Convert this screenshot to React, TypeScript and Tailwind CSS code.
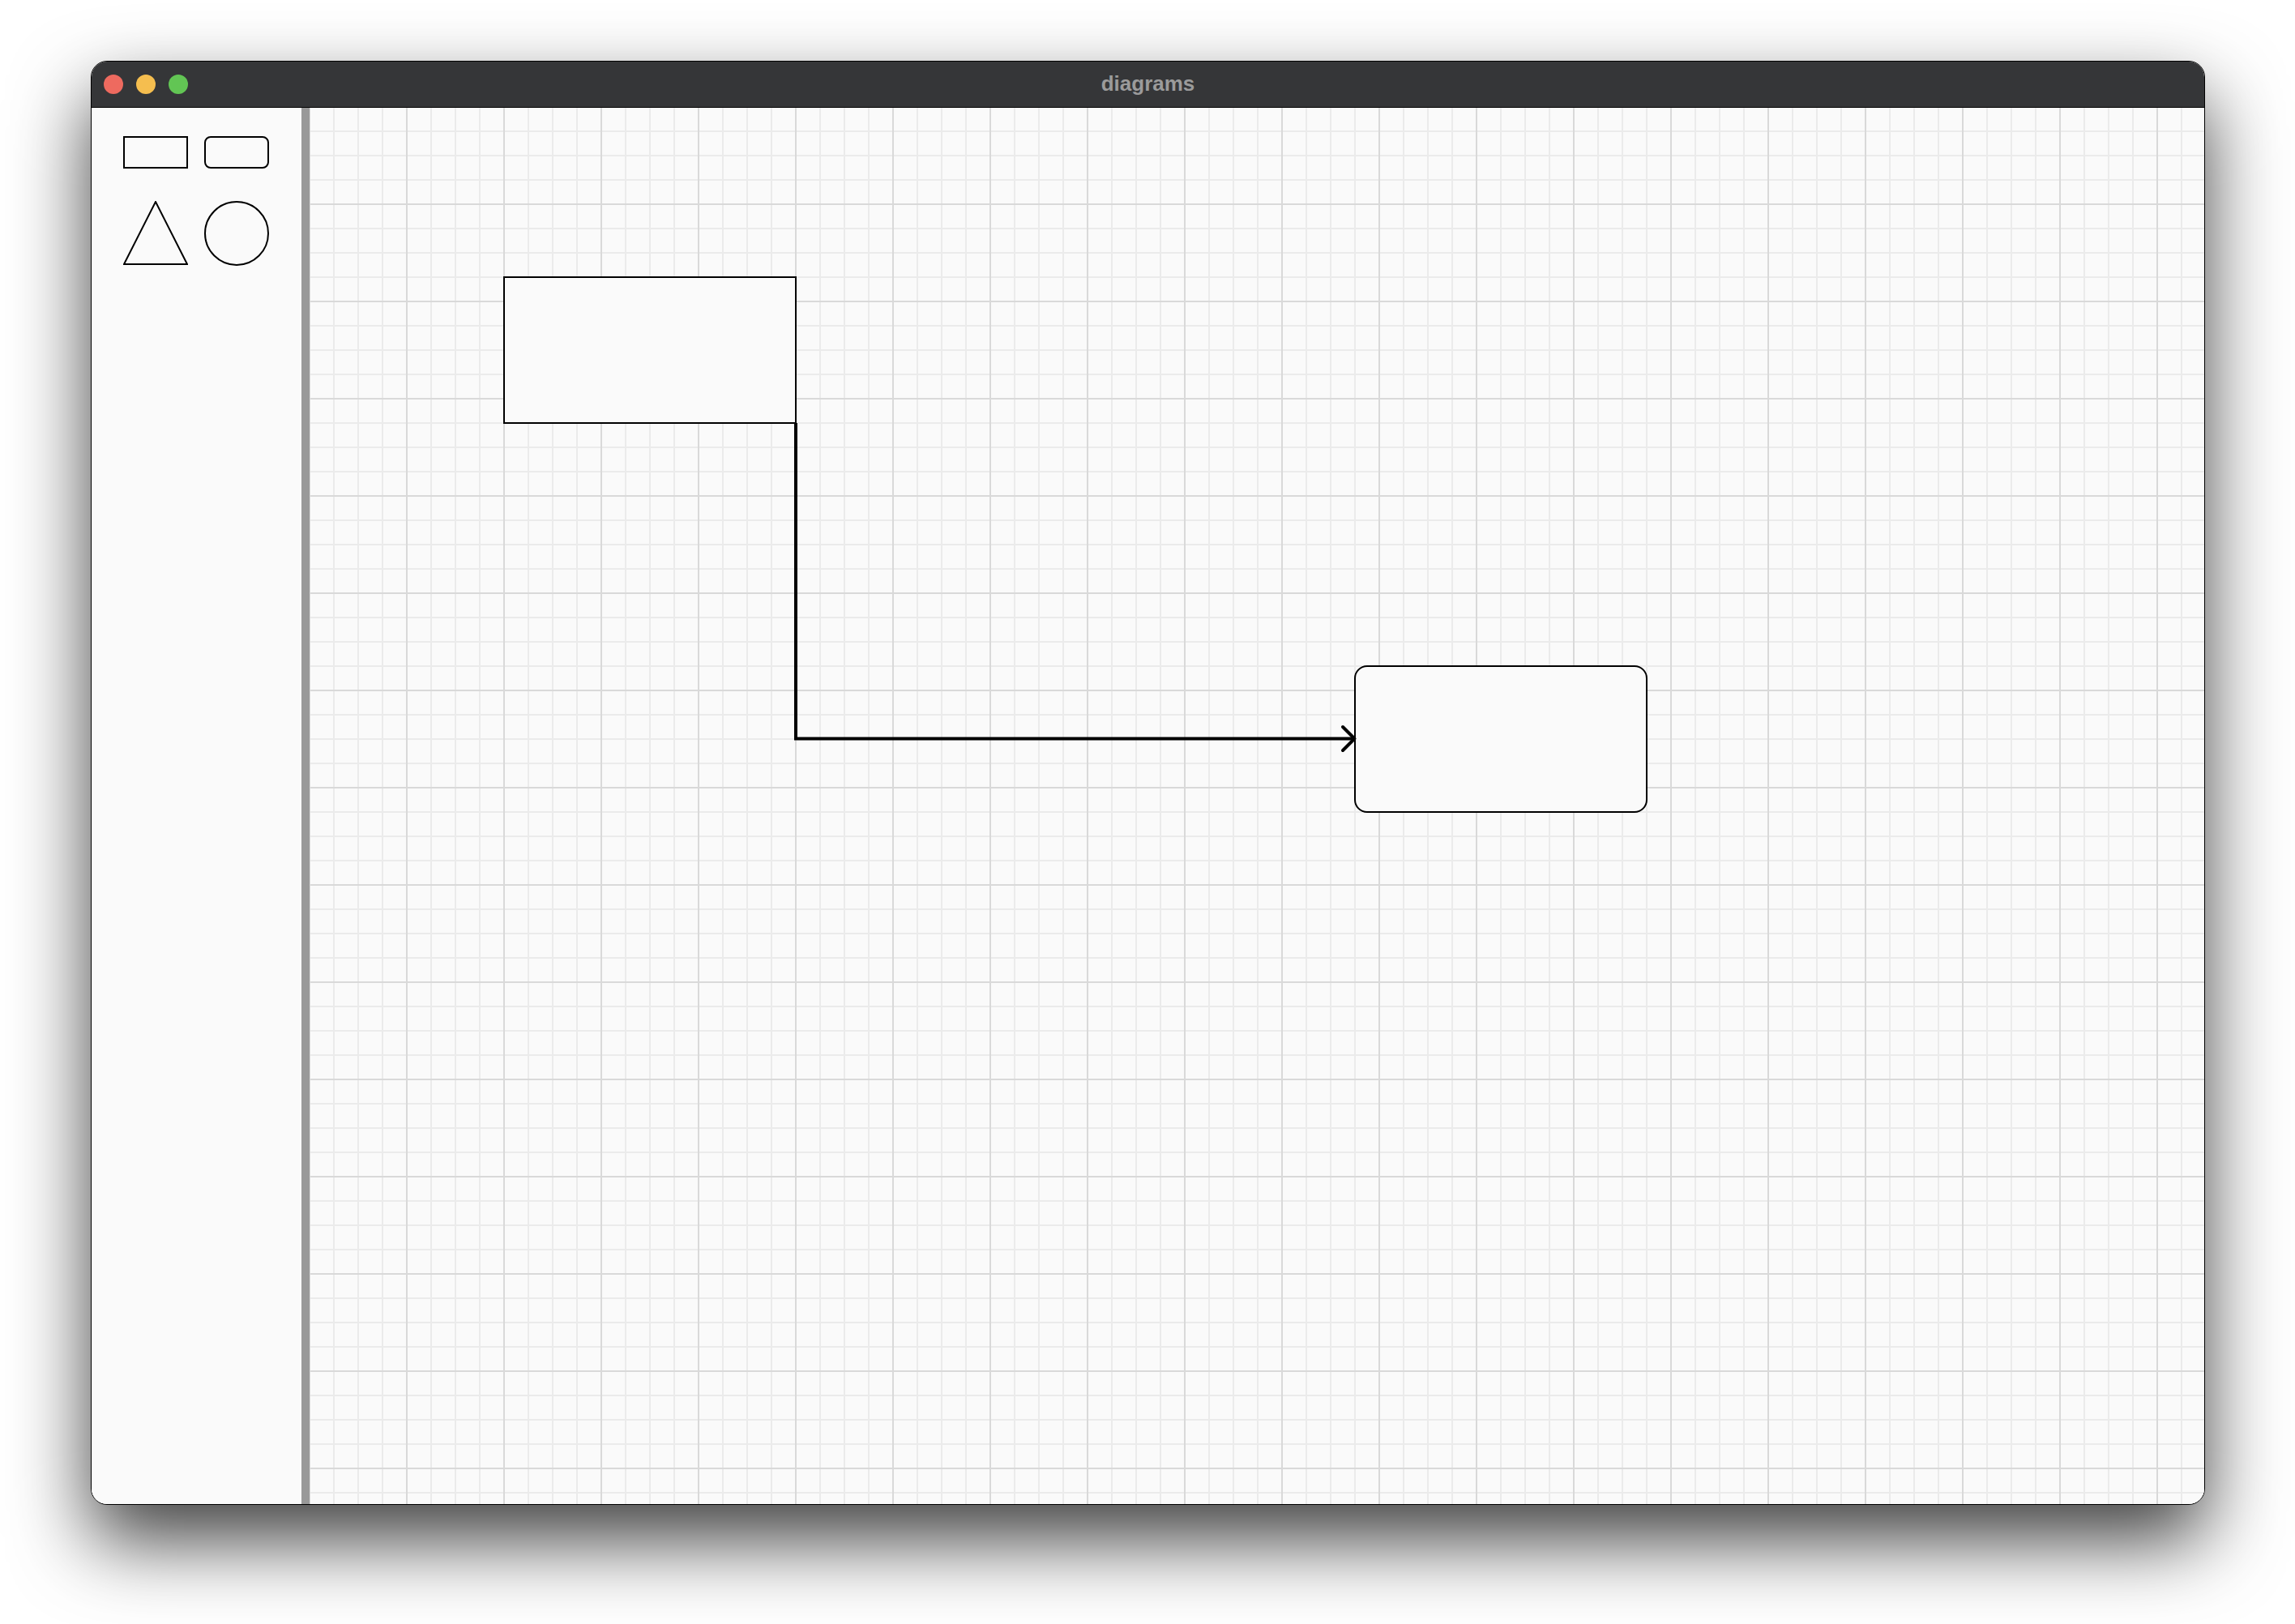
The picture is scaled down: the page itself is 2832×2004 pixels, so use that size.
import React from "react";

function SidebarShapes() {
  return (
    <div className="grid grid-cols-[80px_80px] gap-x-[20px] gap-y-[40px] pl-[39px] pt-[35px]">
      <div className="h-[40px] w-[80px] border-2 border-black" />
      <div className="h-[40px] w-[80px] rounded-[8px] border-2 border-black" />
      <svg width="80" height="80" viewBox="0 0 80 80" className="block">
        <polygon points="40,2 79,79 1,79" fill="none" stroke="#000" strokeWidth="2" strokeLinejoin="miter" transform="translate(0,-1)" />
      </svg>
      <svg width="80" height="80" viewBox="0 0 80 80" className="block">
        <circle cx="40" cy="40" r="39" fill="none" stroke="#000" strokeWidth="2" />
      </svg>
    </div>
  );
}

export default function App() {
  return (
    <div className="h-[2004px] w-[2832px] bg-white pl-[112px] pt-[75px]">
      <div className="flex h-[1782px] w-[2609px] flex-col overflow-hidden rounded-[20px] border border-black bg-[#fafafa] shadow-[0_44px_96px_rgba(0,0,0,0.75)]">
        <div className="relative flex h-[57px] shrink-0 items-center border-b border-black bg-[#353638] pl-[15px]">
          <div className="flex gap-[16px]">
            <div className="h-[24px] w-[24px] rounded-full bg-[#ee6a5f]" />
            <div className="h-[24px] w-[24px] rounded-full bg-[#f5be4f]" />
            <div className="h-[24px] w-[24px] rounded-full bg-[#62c554]" />
          </div>
          <div className="absolute inset-0 flex items-center justify-center pb-[2px] font-['Liberation_Sans',Arial,sans-serif] text-[26px] font-bold text-[#9b9b9b]">
            diagrams
          </div>
        </div>
        <div className="flex min-h-0 flex-1">
          <div className="w-[259px] shrink-0 bg-[#fafafa]">
            <SidebarShapes />
          </div>
          <div className="w-[10px] shrink-0 bg-[#999999]" />
          <div className="relative flex-1 overflow-hidden bg-[#fafafa] bg-[linear-gradient(to_right,#d9d9d9_2px,transparent_2px),linear-gradient(to_bottom,#d9d9d9_2px,transparent_2px),linear-gradient(to_right,#ebebeb_2px,transparent_2px),linear-gradient(to_bottom,#ebebeb_2px,transparent_2px)] bg-[size:120px_120px,120px_120px,30px_30px,30px_30px] bg-[position:-1px_-2px,-1px_-2px,-1px_-2px,-1px_-2px]">
            <div className="absolute left-[239px] top-[208px] h-[182px] w-[362px] border-2 border-black bg-[#fafafa]" />
            <div className="absolute left-[1289px] top-[688px] h-[182px] w-[362px] rounded-[16px] border-2 border-black bg-[#fafafa]" />
            <svg className="absolute left-0 top-0" width="1400" height="900" viewBox="0 0 1400 900">
              <polyline points="600,389 600,778.5 1289,778.5" fill="none" stroke="#000" strokeWidth="4" strokeLinejoin="miter" />
              <polyline points="1275,764 1289.5,778.5 1275,793" fill="none" stroke="#000" strokeWidth="4" strokeLinecap="round" strokeLinejoin="round" />
            </svg>
          </div>
        </div>
      </div>
    </div>
  );
}
